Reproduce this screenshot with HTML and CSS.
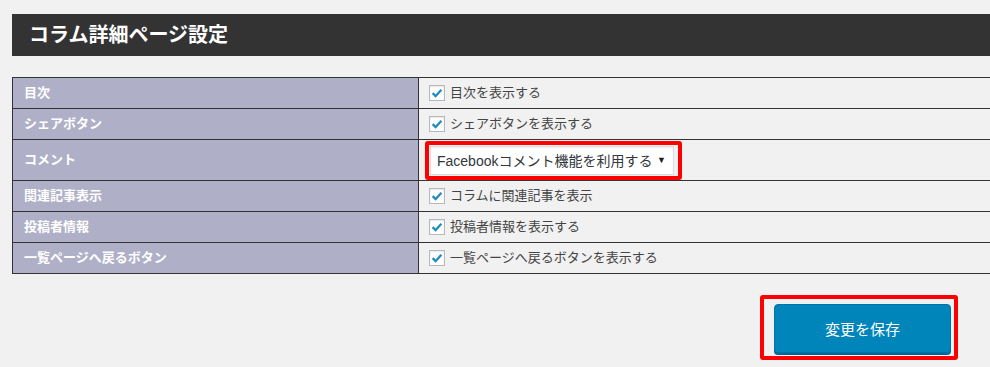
FILE: index.html
```html
<!DOCTYPE html>
<html lang="ja">
<head>
  <meta charset="utf-8"/>
  <title>コラム詳細ページ設定</title>
  <link rel="stylesheet" href="styles.css">
</head>
<body>

  <div class="wrap">

    <h2 class="titulo">コラム詳細ページ設定</h2>

    <table class="ajustes">
      <tr>
        <th>目次</th>
        <td><label class="opcion"><span class="check"><svg viewBox="0 0 16 16"><path d="M3 8.2 L6.4 11.6 L13 4.2"/></svg></span>目次を表示する</label></td>
      </tr>
      <tr>
        <th>シェアボタン</th>
        <td><label class="opcion"><span class="check"><svg viewBox="0 0 16 16"><path d="M3 8.2 L6.4 11.6 L13 4.2"/></svg></span>シェアボタンを表示する</label></td>
      </tr>
      <tr class="fila_alta">
        <th>コメント</th>
        <td>
          <div class="marca marca_select">
            <div class="select">
              <span>Facebookコメント機能を利用する</span>
              <span class="flecha">▼</span>
            </div>
          </div>
        </td>
      </tr>
      <tr>
        <th>関連記事表示</th>
        <td><label class="opcion"><span class="check"><svg viewBox="0 0 16 16"><path d="M3 8.2 L6.4 11.6 L13 4.2"/></svg></span>コラムに関連記事を表示</label></td>
      </tr>
      <tr>
        <th>投稿者情報</th>
        <td><label class="opcion"><span class="check"><svg viewBox="0 0 16 16"><path d="M3 8.2 L6.4 11.6 L13 4.2"/></svg></span>投稿者情報を表示する</label></td>
      </tr>
      <tr>
        <th>一覧ページへ戻るボタン</th>
        <td><label class="opcion"><span class="check"><svg viewBox="0 0 16 16"><path d="M3 8.2 L6.4 11.6 L13 4.2"/></svg></span>一覧ページへ戻るボタンを表示する</label></td>
      </tr>
    </table>

    <div class="acciones">
      <div class="marca marca_boton">
        <button class="guardar">変更を保存</button>
      </div>
    </div>

  </div>

</body>
</html>
```

FILE: styles.css
```css
html{
  overflow:hidden;
}

body{
  margin:0;
  background-color:#f1f1f1;
  font-family:"Liberation Sans","Noto Sans CJK JP",sans-serif;
  color:#444;
}

.wrap{
  padding:14px 0 0 12px;
}

.titulo{
  margin:0;
  width:1000px;
  height:42px;
  padding-left:17px;
  box-sizing:border-box;
  background-color:#333;
  color:white;
  font-size:20px;
  font-weight:bold;
  line-height:42px;
}

.ajustes{
  margin-top:21px;
  width:1000px;
  border-collapse:collapse;
  font-size:13px;
}

.ajustes th,.ajustes td{
  border:1px solid #333;
  height:30px;
  padding:0;
  vertical-align:middle;
}

.ajustes th{
  width:394px;
  padding-left:11px;
  text-align:left;
  background-color:#afb0c7;
  color:white;
  font-weight:bold;
  line-height:16px;
}

.ajustes td{
  padding-left:10px;
  background-color:#f1f1f1;
}

.fila_alta th,.fila_alta td{
  height:40px;
}

.opcion{
  display:flex;
  align-items:center;
  gap:5px;
  line-height:16px;
  color:#444;
}

.check{
  width:16px;
  height:16px;
  box-sizing:border-box;
  border:1px solid #b4b9be;
  background-color:white;
  box-shadow:inset 0 1px 2px rgba(0,0,0,0.1);
  display:flex;
}

.check svg{
  width:14px;
  height:14px;
}

.check path{
  fill:none;
  stroke:#1e8cbe;
  stroke-width:2.6;
}

.marca{
  display:inline-block;
  border:4px solid red;
  border-radius:3px;
}

.marca_select{
  margin-left:-4px;
  padding:1px 4px 1px 1px;
  vertical-align:middle;
}

.select{
  width:244px;
  height:29px;
  box-sizing:border-box;
  border:1px solid #ddd;
  background-color:white;
  box-shadow:inset 0 1px 2px rgba(0,0,0,0.07);
  display:flex;
  align-items:center;
  justify-content:space-between;
  padding:0 7px 0 6px;
  font-size:14px;
  color:#32373c;
}

.flecha{
  font-size:9px;
  color:#222;
}

.acciones{
  width:946px;
  margin-top:21px;
  display:flex;
  justify-content:flex-end;
}

.marca_boton{
  padding:5px 3px 3px 10px;
}

.guardar{
  display:block;
  width:177px;
  height:49px;
  border:1px solid #0073aa;
  border-radius:4px;
  background-color:#0085ba;
  box-shadow:0 2px 0 #006799;
  color:white;
  font-family:"Liberation Sans","Noto Sans CJK JP",sans-serif;
  font-size:15px;
  cursor:pointer;
}
```
